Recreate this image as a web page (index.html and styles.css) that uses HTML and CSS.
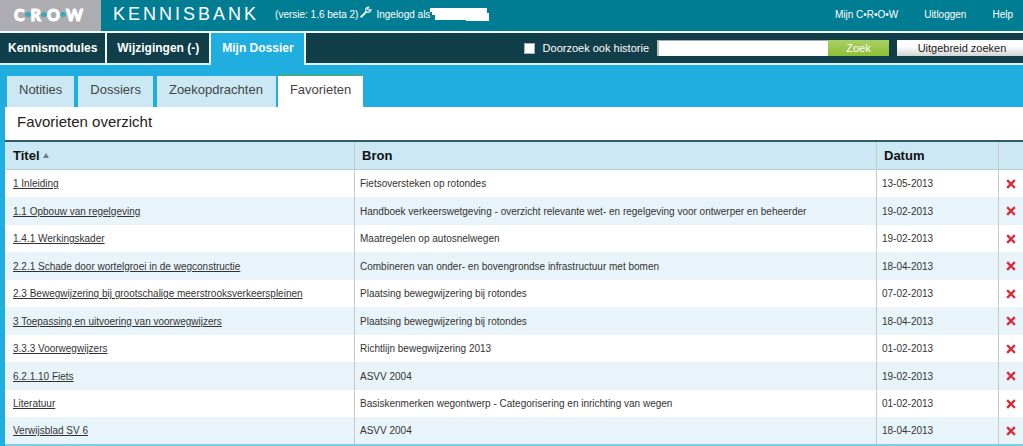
FILE: index.html
```html
<!DOCTYPE html>
<html lang="nl">
<head>
<meta charset="utf-8">
<title>CROW Kennisbank - Favorieten</title>
<link rel="stylesheet" href="styles.css">
</head>
<body>
<header class="topbar">
  <div class="logo">C<i></i>R<i></i>O<i></i>W</div>
  <div class="brand">KENNISBANK</div>
  <div class="session">
    <span>(versie: 1.6 beta 2)</span>
    <svg class="wrench" viewBox="0 0 12 12" aria-hidden="true"><path d="M1.3 10.7 6.3 5.7" stroke="#e8f6f8" stroke-width="2" stroke-linecap="round"/><path d="M8.6 1.2A2.6 2.6 0 1 0 10.9 3.7L9 4.4 7.6 3.1Z" fill="none" stroke="#e8f6f8" stroke-width="1.2"/></svg>
    <span>Ingelogd als</span>
    <svg class="masked" viewBox="0 0 60 15" aria-hidden="true"><path d="M0 1H57V6H59V14H36V13H5V8H2V5H0Z" fill="#fff"/></svg>
  </div>
  <nav class="toplinks">
    <a href="#">Mijn C•R•O•W</a>
    <a href="#">Uitloggen</a>
    <a href="#">Help</a>
  </nav>
</header>
<div class="mainbar">
  <nav class="maintabs">
    <a href="#">Kennismodules</a>
    <a href="#">Wijzigingen (-)</a>
    <a href="#" class="current">Mijn Dossier</a>
  </nav>
  <form class="search">
    <input type="checkbox" id="history" class="check">
    <label for="history">Doorzoek ook historie</label>
    <input type="text" class="query" aria-label="Zoekterm">
    <button type="button" class="go">Zoek</button>
    <button type="button" class="advanced">Uitgebreid zoeken</button>
  </form>
</div>
<main class="page">
  <nav class="subtabs">
    <a href="#">Notities</a>
    <a href="#">Dossiers</a>
    <a href="#" class="wide">Zoekopdrachten</a>
    <a href="#" class="current">Favorieten</a>
  </nav>
  <section class="panel">
    <h1>Favorieten overzicht</h1>
    <table class="favorites">
      <colgroup><col class="c-title"><col><col class="c-date"><col class="c-delete"></colgroup>
      <thead><tr><th>Titel <svg class="sort" viewBox="0 0 6 5" aria-hidden="true"><path d="M3 0 6 5H0Z" fill="#6d7f88"/></svg></th><th>Bron</th><th>Datum</th><th></th></tr></thead>
      <tbody>
        <tr><td><a href="#">1 Inleiding</a></td><td>Fietsoversteken op rotondes</td><td>13-05-2013</td><td><button type="button" class="delete" aria-label="Verwijderen"><svg viewBox="0 0 10 10"><use href="#cross"/></svg></button></td></tr>
        <tr><td><a href="#">1.1 Opbouw van regelgeving</a></td><td>Handboek verkeerswetgeving - overzicht relevante wet- en regelgeving voor ontwerper en beheerder</td><td>19-02-2013</td><td><button type="button" class="delete" aria-label="Verwijderen"><svg viewBox="0 0 10 10"><use href="#cross"/></svg></button></td></tr>
        <tr><td><a href="#">1.4.1 Werkingskader</a></td><td>Maatregelen op autosnelwegen</td><td>19-02-2013</td><td><button type="button" class="delete" aria-label="Verwijderen"><svg viewBox="0 0 10 10"><use href="#cross"/></svg></button></td></tr>
        <tr><td><a href="#">2.2.1 Schade door wortelgroei in de wegconstructie</a></td><td>Combineren van onder- en bovengrondse infrastructuur met bomen</td><td>18-04-2013</td><td><button type="button" class="delete" aria-label="Verwijderen"><svg viewBox="0 0 10 10"><use href="#cross"/></svg></button></td></tr>
        <tr><td><a href="#">2.3 Bewegwijzering bij grootschalige meerstrooksverkeerspleinen</a></td><td>Plaatsing bewegwijzering bij rotondes</td><td>07-02-2013</td><td><button type="button" class="delete" aria-label="Verwijderen"><svg viewBox="0 0 10 10"><use href="#cross"/></svg></button></td></tr>
        <tr><td><a href="#">3 Toepassing en uitvoering van voorwegwijzers</a></td><td>Plaatsing bewegwijzering bij rotondes</td><td>18-04-2013</td><td><button type="button" class="delete" aria-label="Verwijderen"><svg viewBox="0 0 10 10"><use href="#cross"/></svg></button></td></tr>
        <tr><td><a href="#">3.3.3 Voorwegwijzers</a></td><td>Richtlijn bewegwijzering 2013</td><td>01-02-2013</td><td><button type="button" class="delete" aria-label="Verwijderen"><svg viewBox="0 0 10 10"><use href="#cross"/></svg></button></td></tr>
        <tr><td><a href="#">6.2.1.10 Fiets</a></td><td>ASVV 2004</td><td>19-02-2013</td><td><button type="button" class="delete" aria-label="Verwijderen"><svg viewBox="0 0 10 10"><use href="#cross"/></svg></button></td></tr>
        <tr><td><a href="#">Literatuur</a></td><td>Basiskenmerken wegontwerp - Categorisering en inrichting van wegen</td><td>01-02-2013</td><td><button type="button" class="delete" aria-label="Verwijderen"><svg viewBox="0 0 10 10"><use href="#cross"/></svg></button></td></tr>
        <tr><td><a href="#">Verwijsblad SV 6</a></td><td>ASVV 2004</td><td>18-04-2013</td><td><button type="button" class="delete" aria-label="Verwijderen"><svg viewBox="0 0 10 10"><use href="#cross"/></svg></button></td></tr>
      </tbody>
    </table>
  </section>
</main>
<svg class="defs" aria-hidden="true"><defs><path id="cross" d="M2 2 8 8M8 2 2 8" fill="none" stroke="#d92b38" stroke-width="2.4" stroke-linecap="square"/></defs></svg>
</body>
</html>
```
FILE: styles.css
```css
* { box-sizing: border-box; }
body {
  margin: 0;
  background: #20addf;
  font-family: "Liberation Sans", Arial, sans-serif;
  font-size: 10px;
  color: #333;
}
a { color: inherit; text-decoration: none; }
button { font-family: inherit; border: 0; padding: 0; }
svg { display: block; }
.defs { position: absolute; width: 0; height: 0; }

.topbar {
  display: flex;
  align-items: stretch;
  height: 31px;
  background: #007d93;
  color: #fff;
  white-space: nowrap;
}
.logo {
  display: flex;
  align-items: center;
  justify-content: center;
  width: 101px;
  padding: 0 4px 2px 0;
  background: #adacb1;
  font-family: Lato, sans-serif;
  font-size: 16px;
  font-weight: 900;
  -webkit-text-stroke: 1px #fff;
}
.logo i { z-index: 1; width: 6px; height: 5px; border-radius: 50%; background: #3ba9bd; }
.brand {
  padding-left: 12px;
  font-size: 18px;
  line-height: 28px;
  letter-spacing: 3px;
}
.session {
  display: flex;
  align-items: center;
  padding: 0 0 3px 16px;
}
.wrench { width: 12px; height: 12px; margin: 0 4px 4px 2px; }
.masked { width: 60px; height: 15px; }
.toplinks {
  display: flex;
  align-items: center;
  gap: 26px;
  margin-left: auto;
  padding: 0 10px 3px 0;
}

.mainbar {
  display: flex;
  justify-content: space-between;
  height: 34px;
  border-top: 2px solid #f4fbfc;
  background: linear-gradient(#103e49 30px, #dff3fa 30px);
  white-space: nowrap;
}
.maintabs { display: flex; }
.maintabs a {
  height: 30px;
  padding: 0 10px;
  border-right: 2px solid #f4fbfc;
  color: #fff;
  font-size: 12px;
  font-weight: bold;
  line-height: 30px;
}
.maintabs a:first-child { padding: 0 8px; }
.maintabs .current { height: 32px; padding: 0 10px 0 11px; background: #20addf; }
.search {
  display: flex;
  align-items: center;
  height: 30px;
  color: #fff;
  font-size: 11px;
}
.check {
  appearance: none;
  width: 11px;
  height: 11px;
  margin: 0 8px 0 0;
  border: 1px solid #a8b0b3;
  background: #fff;
}
.check:checked { background: #8fbf3f; }
.query {
  width: 171px;
  height: 16px;
  margin-left: 8px;
  padding: 0 4px;
  border: 0;
  border-top: 1px solid #aaa;
  border-left: 2px solid #bbb;
  background: #fff;
  font-size: 11px;
}
.go {
  width: 61px;
  height: 16px;
  margin-right: 8px;
  background: linear-gradient(#a9cf66, #8fbf33);
  color: #fff;
  font-size: 11px;
}
.advanced {
  width: 126px;
  height: 16px;
  padding-left: 4px;
  background: linear-gradient(#fff 40%, #d4d4d4);
  color: #222;
  font-size: 11px;
}

.page { padding: 10px 0 0 5px; }
.subtabs { display: flex; gap: 4px; padding-left: 2px; }
.subtabs a {
  height: 32px;
  padding: 0 12px;
  border-top: 1px solid #20addf;
  background: #cbe8f4;
  color: #444;
  font-size: 13px;
  line-height: 28px;
}
.subtabs .wide { padding-right: 13px; margin-right: -2px; }
.subtabs .current { border-color: #69a43a; background: #fff; }

.panel { background: #fff; }
h1 {
  margin: 0;
  padding-left: 12px;
  color: #222;
  font-size: 15px;
  font-weight: normal;
  line-height: 30px;
  height: 33px;
}
.favorites {
  width: 100%;
  table-layout: fixed;
  border-collapse: separate;
  border-spacing: 0;
  border-top: 2px solid #315b65;
  border-bottom: 2px solid #7dcde9;
}
.c-title { width: 349px; }
.c-date { width: 122px; }
.c-delete { width: 25px; }
th, td { border-left: 1px solid #c5cacd; text-align: left; white-space: nowrap; }
th:first-child, td:first-child { border-left: 0; padding-left: 8px; }
th {
  height: 28px;
  padding: 0 7px;
  border-bottom: 1px solid #b9cbd3;
  background: #cbe8f4;
  color: #111;
  font-size: 13px;
}
.sort { display: inline-block; width: 6px; height: 5px; margin-bottom: 2px; }
td { height: 27px; padding: 0 5px; }
tbody tr:nth-child(even) td { height: 28px; background: #e8f4f9; }
tbody tr:last-child td { height: 27px; }
td a { text-decoration: underline; }
.delete { display: block; width: 10px; height: 10px; margin-left: 2px; background: none; }
```
